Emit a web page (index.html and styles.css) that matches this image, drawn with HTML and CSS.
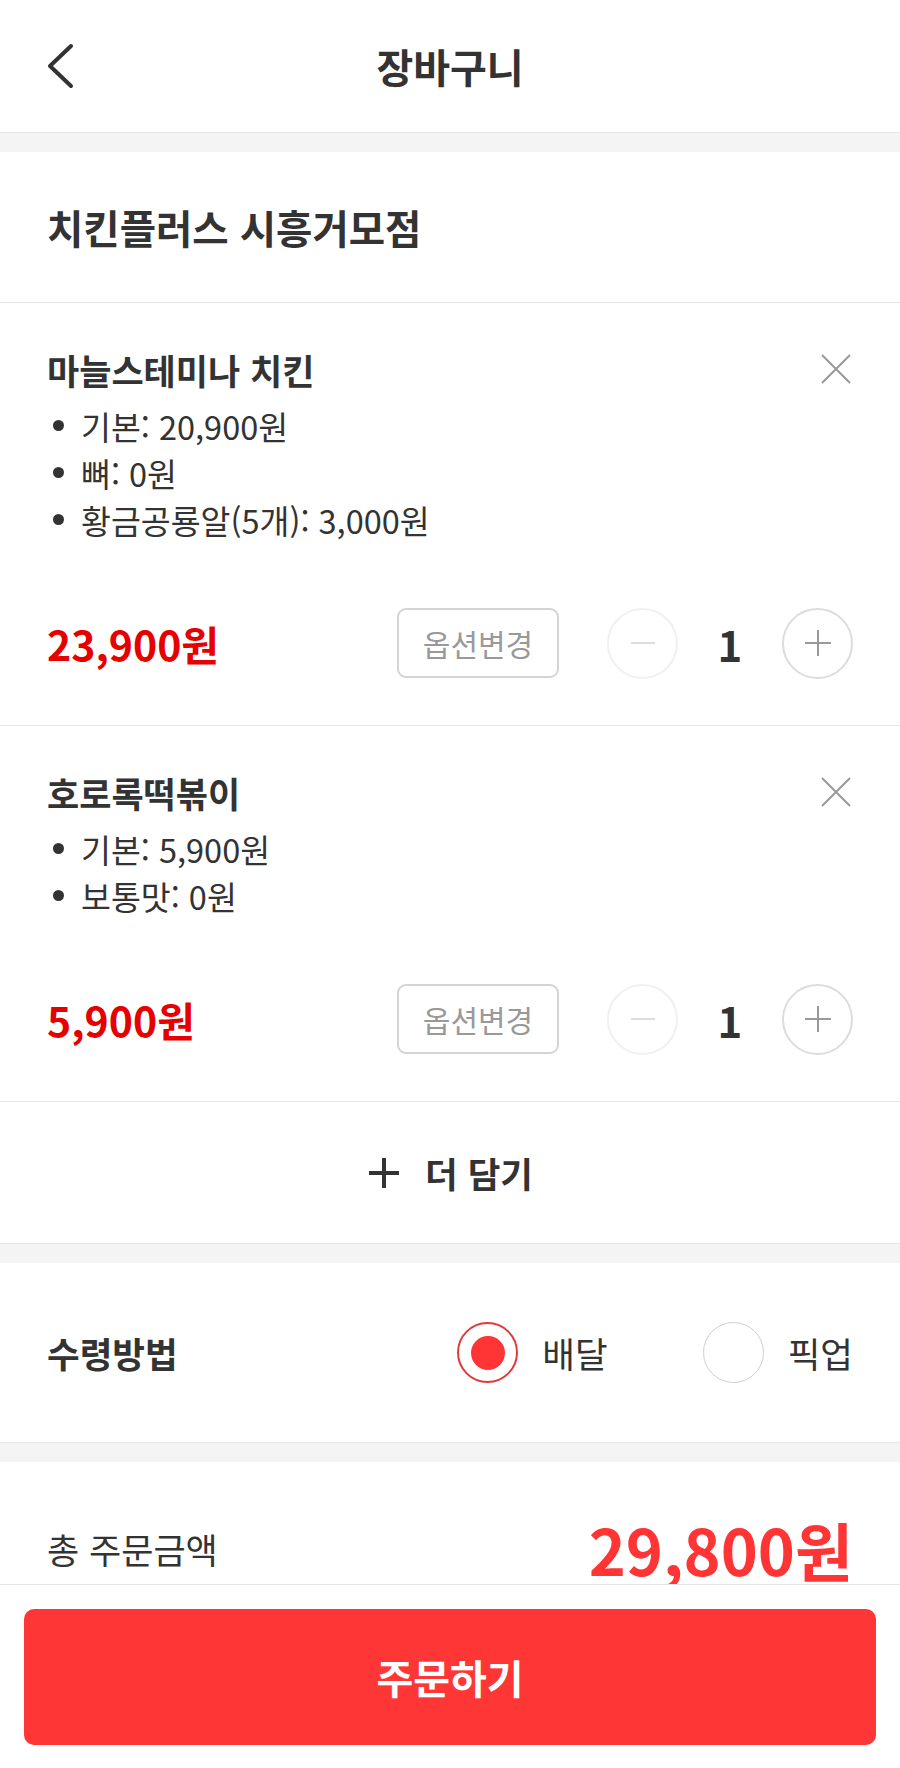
FILE: index.html
```html
<!DOCTYPE html>
<html lang="ko">
<head>
<meta charset="utf-8">
<title>장바구니</title>
<link rel="stylesheet" href="styles.css">
</head>
<body>
<div class="app">
  <div class="scroll">
    <header class="topbar">
      <div class="topbar-left">
        <svg class="back" width="30" height="48" viewBox="0 0 30 48"><path d="M24 3 L3 23 L24 43" fill="none" stroke="#333" stroke-width="4" stroke-linecap="round" stroke-linejoin="round"/></svg>
      </div>
      <h1 class="title">장바구니</h1>
      <div class="topbar-right"></div>
    </header>
    <div class="band"></div>
    <section class="store">치킨플러스 시흥거모점</section>

    <section class="item">
      <div class="item-head">
        <h2 class="item-name">마늘스테미나 치킨</h2>
        <svg class="remove" width="30" height="30" viewBox="0 0 30 30"><path d="M1 1 L29 29 M29 1 L1 29" stroke="#999" stroke-width="2" fill="none"/></svg>
      </div>
      <ul class="options">
        <li>기본: 20,900원</li>
        <li>뼈: 0원</li>
        <li>황금공룡알(5개): 3,000원</li>
      </ul>
      <div class="item-foot">
        <span class="price">23,900원</span>
        <div class="controls">
          <span class="opt-btn">옵션변경</span>
          <span class="circle minus"><svg width="26" height="26" viewBox="0 0 26 26"><path d="M1 13 H25" stroke="#ddd" stroke-width="2"/></svg></span>
          <span class="qty">1</span>
          <span class="circle plus"><svg width="28" height="28" viewBox="0 0 28 28"><path d="M1 14 H27 M14 1 V27" stroke="#999" stroke-width="2"/></svg></span>
        </div>
      </div>
    </section>

    <section class="item">
      <div class="item-head">
        <h2 class="item-name">호로록떡볶이</h2>
        <svg class="remove" width="30" height="30" viewBox="0 0 30 30"><path d="M1 1 L29 29 M29 1 L1 29" stroke="#999" stroke-width="2" fill="none"/></svg>
      </div>
      <ul class="options">
        <li>기본: 5,900원</li>
        <li>보통맛: 0원</li>
      </ul>
      <div class="item-foot">
        <span class="price">5,900원</span>
        <div class="controls">
          <span class="opt-btn">옵션변경</span>
          <span class="circle minus"><svg width="26" height="26" viewBox="0 0 26 26"><path d="M1 13 H25" stroke="#ddd" stroke-width="2"/></svg></span>
          <span class="qty">1</span>
          <span class="circle plus"><svg width="28" height="28" viewBox="0 0 28 28"><path d="M1 14 H27 M14 1 V27" stroke="#999" stroke-width="2"/></svg></span>
        </div>
      </div>
    </section>

    <section class="more">
      <svg width="34" height="32" viewBox="0 0 34 32"><path d="M2 16 H32 M17 1 V31" stroke="#333" stroke-width="4"/></svg>
      <span>더 담기</span>
    </section>
    <div class="band"></div>

    <section class="receive">
      <span class="receive-label">수령방법</span>
      <div class="radios">
        <label class="radio"><span class="dot on"><span class="inner"></span></span><span>배달</span></label>
        <label class="radio"><span class="dot"></span><span>픽업</span></label>
      </div>
    </section>
    <div class="band"></div>

    <section class="total">
      <span class="total-label">총 주문금액</span>
      <span class="total-price">29,800원</span>
    </section>
  </div>
  <footer class="bottombar">
    <button class="order">주문하기</button>
  </footer>
</div>
</body>
</html>
```

FILE: styles.css
```css
* { box-sizing: border-box; }
html, body { margin: 0; padding: 0; }
body {
  font-family: "Noto Sans CJK KR", "Noto Sans", sans-serif;
  color: #333;
  background: #fff;
}
.app {
  width: 900px;
  height: 1768px;
  display: flex;
  flex-direction: column;
}
.scroll {
  flex: 1;
  min-height: 0;
}
.topbar {
  height: 133px;
  border-bottom: 1px solid #e6e6e6;
  display: grid;
  grid-template-columns: 1fr auto 1fr;
  align-items: center;
  padding: 0 47px;
}
.topbar-left { display: flex; align-items: center; }
.back { display: block; margin-top: 2px; }
.title {
  margin: 0;
  font-size: 40px;
  font-weight: 700;
  line-height: 1;
  color: #333;
}
.band {
  height: 19px;
  background: #f4f4f4;
}
.store {
  height: 151px;
  border-bottom: 1px solid #e6e6e6;
  display: flex;
  align-items: center;
  padding: 0 47px 2px;
  font-size: 39.5px;
  font-weight: 700;
}
.item {
  border-bottom: 1px solid #e6e6e6;
  padding: 43px 47px 46px;
}
.item-head {
  display: flex;
  justify-content: space-between;
  align-items: flex-start;
}
.item-name {
  margin: 0;
  font-size: 35px;
  line-height: 48px;
  font-weight: 700;
}
.remove { display: block; margin-top: 8px; margin-right: 2px; }
.options {
  list-style: none;
  margin: 8px 0 0;
  padding: 0;
}
.options li {
  font-size: 32.5px;
  line-height: 47px;
  display: flex;
  align-items: center;
  gap: 17px;
}
.options li::before {
  content: "";
  flex: none;
  width: 11px;
  height: 11px;
  border-radius: 50%;
  background: #333;
  margin-left: 6px;
}
.item-foot {
  margin-top: 64px;
  display: flex;
  justify-content: space-between;
  align-items: center;
  height: 72px;
}
.price {
  font-size: 41px;
  font-weight: 700;
  color: #e60000;
}
.controls {
  display: flex;
  align-items: center;
}
.opt-btn {
  width: 162px;
  height: 70px;
  border: 2px solid #d4d4d4;
  border-radius: 9px;
  display: flex;
  align-items: center;
  justify-content: center;
  font-size: 30px;
  color: #999;
  margin-right: 48px;
}
.circle {
  width: 71px;
  height: 71px;
  border-radius: 50%;
  display: flex;
  align-items: center;
  justify-content: center;
}
.circle svg { display: block; }
.minus { border: 2px solid #f0f0f0; }
.plus { border: 2px solid #dcdcdc; }
.qty {
  width: 104px;
  text-align: center;
  font-size: 42px;
  font-weight: 700;
  color: #333;
}
.more {
  height: 142px;
  border-bottom: 1px solid #e6e6e6;
  display: flex;
  align-items: center;
  justify-content: center;
  gap: 24px;
  font-size: 35.5px;
  font-weight: 700;
}
.more svg { display: block; }
.receive {
  height: 180px;
  border-bottom: 1px solid #e6e6e6;
  display: flex;
  align-items: center;
  justify-content: space-between;
  padding: 0 47px;
}
.receive-label {
  font-size: 35.5px;
  font-weight: 700;
}
.radios {
  display: flex;
  align-items: center;
  gap: 95px;
}
.radio {
  display: flex;
  align-items: center;
  gap: 24px;
  font-size: 35.5px;
}
.dot {
  width: 61px;
  height: 61px;
  border-radius: 50%;
  border: 1.5px solid #cfcfcf;
  display: flex;
  align-items: center;
  justify-content: center;
}
.dot.on { border: 2px solid #e03a3a; }
.inner {
  width: 34px;
  height: 34px;
  border-radius: 50%;
  background: #ff3434;
}
.total {
  display: flex;
  justify-content: space-between;
  align-items: center;
  padding: 54px 47px 0;
}
.total-label {
  font-size: 35px;
  line-height: 66px;
}
.total-price {
  font-size: 63px;
  font-weight: 700;
  color: #ff3434;
  line-height: 66px;
}
.bottombar {
  height: 184px;
  border-top: 1px solid #e6e6e6;
  padding: 24px 24px 23px;
  background: #fff;
}
.order {
  width: 100%;
  height: 136px;
  border: none;
  border-radius: 10px;
  background: #ff3636;
  color: #fff;
  font-family: "Noto Sans CJK KR", "Noto Sans", sans-serif;
  font-size: 40px;
  font-weight: 700;
}
```
